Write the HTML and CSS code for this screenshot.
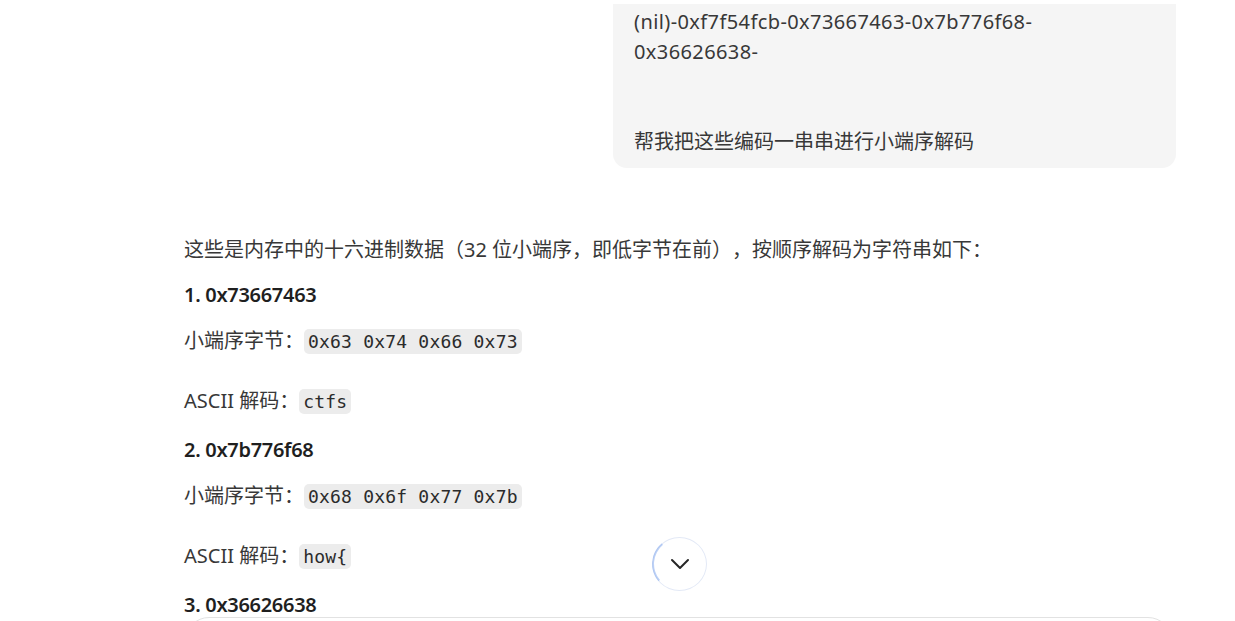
FILE: index.html
```html
<!DOCTYPE html>
<html lang="zh-CN">
<head>
  <meta charset="UTF-8">
  <title>小端序解码</title>
  <link rel="stylesheet" href="styles.css">
</head>
<body>
  <!-- Chat thread -->
  <div id="thread">
    <!-- User message -->
    <div class="user-row">
      <div class="bubble"><span class="hex">(nil)-0xf7f54fcb-0x73667463-0x7b776f68-<br>0x36626638-</span><br><br><br>帮我把这些编码一串串进行小端序解码</div>
    </div>

    <!-- Assistant answer -->
    <div class="answer">
      <p class="intro">这些是内存中的十六进制数据（32 位小端序，即低字节在前），按顺序解码为字符串如下：</p>

      <div class="item">
        <p class="head">1. 0x73667463</p>
        <p class="bytes">小端序字节：<code>0x63 0x74 0x66 0x73</code></p>
        <p class="ascii">ASCII 解码：<code>ctfs</code></p>
      </div>

      <div class="item">
        <p class="head">2. 0x7b776f68</p>
        <p class="bytes">小端序字节：<code>0x68 0x6f 0x77 0x7b</code></p>
        <p class="ascii">ASCII 解码：<code>how{</code></p>
      </div>

      <div class="item">
        <p class="head">3. 0x36626638</p>
      </div>
    </div>
  </div>

  <!-- Scroll to bottom button -->
  <button id="scroll-down" aria-label="scroll down">
    <svg width="20" height="12" viewBox="0 0 20 12">
      <path d="M2 2 L10 10 L18 2" fill="none" stroke="#262626" stroke-width="2" stroke-linecap="round" stroke-linejoin="round"/>
    </svg>
  </button>

  <!-- Composer (mostly below the fold) -->
  <div id="composer"></div>
</body>
</html>
```

FILE: styles.css
```css
/* Reset defaults */
* { margin: 0; padding: 0; box-sizing: border-box; }

body {
  background: #fff;
  color: #383838;
  font-family: "Noto Sans", "Noto Sans CJK SC", sans-serif;
  font-size: 20px;
  text-spacing-trim: space-all;
  height: 621px;
  overflow: hidden;
  position: relative;
}

/* Thread column */
#thread {
  width: 992px;
  margin-left: 184px;
  padding-top: 4px;
}

/* User bubble */
.user-row {
  display: flex;
  justify-content: flex-end;
}
.bubble {
  width: 563px;
  background: #f5f5f5;
  border-radius: 0 0 14px 14px;
  padding: 3px 20px 11px 21px;
  line-height: 30px;
}
.bubble .hex { letter-spacing: 0.4px; }

/* Assistant answer */
.answer {
  margin-top: 68px;
  line-height: 28px;
}
.intro { margin-bottom: 17px; }
.item { margin-bottom: 20px; }
.head {
  font-weight: 600;
  color: #1f1f1f;
  letter-spacing: -0.3px;
  margin-bottom: 18px;
}
.bytes { margin-bottom: 31px; }

code {
  font-family: "DejaVu Sans Mono", monospace;
  font-size: 18px;
  letter-spacing: 0.2px;
  color: #2b2b2b;
  background: #ececec;
  border-radius: 5px;
  padding: 2px 4px;
}

/* Scroll down button */
#scroll-down {
  position: absolute;
  left: 652px;
  top: 537px;
  width: 55px;
  height: 54px;
  border-radius: 50%;
  border: 1px solid #e3e9f6;
  background: #fff;
  display: flex;
  align-items: center;
  justify-content: center;
  cursor: pointer;
}
#scroll-down::before {
  content: "";
  position: absolute;
  inset: -1px;
  border-radius: 50%;
  border: 2px solid transparent;
  border-left-color: rgba(110, 155, 235, 0.45);
  transform: rotate(5deg);
}

/* Composer */
#composer {
  position: absolute;
  left: 185px;
  top: 617px;
  width: 987px;
  height: 130px;
  border: 1px solid #e2e2e2;
  border-radius: 24px;
  background: #fff;
}
```
